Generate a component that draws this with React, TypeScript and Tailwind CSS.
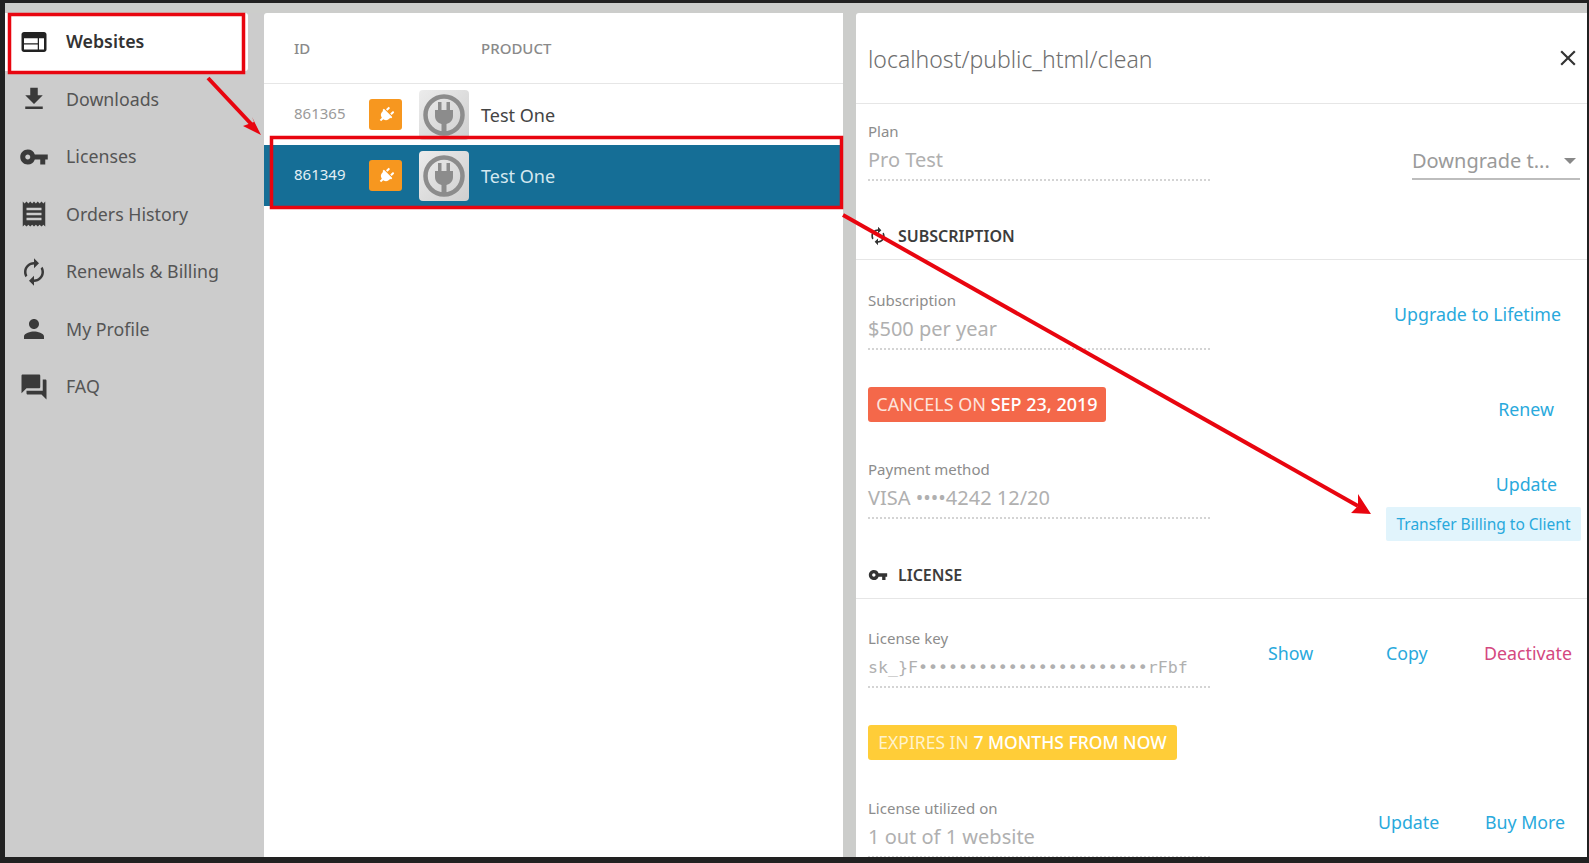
import type { ReactNode } from "react";
import { FaPlug } from "react-icons/fa";
import {
  MdAutorenew,
  MdClose,
  MdFileDownload,
  MdForum,
  MdPerson,
  MdReceipt,
  MdVpnKey,
  MdWeb,
} from "react-icons/md";

const navItems = [
  { label: "Websites", icon: MdWeb, active: true },
  { label: "Downloads", icon: MdFileDownload },
  { label: "Licenses", icon: MdVpnKey },
  { label: "Orders History", icon: MdReceipt },
  { label: "Renewals & Billing", icon: MdAutorenew },
  { label: "My Profile", icon: MdPerson },
  { label: "FAQ", icon: MdForum },
];

const link = "text-[17.800px] text-[#29a9dc]";

function PlugThumb() {
  return (
    <div className="h-[50px] w-[50px] shrink-0 rounded-[4px] bg-gradient-to-br from-[#ececec] to-[#cfcfcf]">
      <svg viewBox="0 0 50 50" className="h-full w-full">
        <circle cx="25" cy="25" r="18.500" fill="none" stroke="#8c8c8c" strokeWidth="4.500" />
        <path
          d="M19 12h3.500v8h5v-8H31v8h3v6c0 4.500-3 7-6.500 8v10h-5V34c-3.500-1-6.500-3.500-6.500-8v-6h3z"
          fill="#8c8c8c"
        />
      </svg>
    </div>
  );
}

function ProductRow({ id, selected }: { id: string; selected?: boolean }) {
  return (
    <div className={`flex h-[61px] items-center pl-[30px] ${selected ? "bg-[#156e96]" : ""}`}>
      <span className={`-mt-[2px] w-[75px] text-[15px] ${selected ? "text-[#e3f0f5]" : "text-[#9a9a9a]"}`}>{id}</span>
      <span className="flex h-[31px] w-[33px] items-center justify-center rounded-[3px] bg-[#f7971f] text-white">
        <FaPlug className="h-[16px] w-[16px] rotate-45" />
      </span>
      <span className="ml-[17px]">
        <PlugThumb />
      </span>
      <span className={`mt-[1px] ml-[12px] text-[18px] ${selected ? "text-[#d4e8f0]" : "text-[#444]"}`}>Test One</span>
    </div>
  );
}

function Field({ label, value, mono }: { label: string; value: string; mono?: boolean }) {
  return (
    <div className="w-[342px] shrink-0 border-b-2 border-dotted border-[#d4d4d4] pb-[5px]">
      <div className="h-[25px] text-[15px] leading-[24px] text-[#8c8c8c]">{label}</div>
      <div
        className={
          mono
            ? "h-[30px] font-['DejaVu_Sans_Mono',monospace] text-[16.600px] leading-[33px] text-[#b0b0b0]"
            : "h-[30px] text-[20px] leading-[32px] text-[#b0b0b0]"
        }
      >
        {value}
      </div>
    </div>
  );
}

function SectionTitle({ icon, children }: { icon: ReactNode; children: ReactNode }) {
  return (
    <div className="flex h-[42px] items-center gap-[10px] border-b border-[#e6e6e6] pb-[5px] pl-[12px] text-[16px] font-semibold text-[#3c3c3c]">
      <span className="flex w-[20px] justify-center text-[#333]">{icon}</span>
      {children}
    </div>
  );
}

export default function App() {
  return (
    <div className="relative flex h-[863px] w-[1589px] flex-col overflow-hidden bg-[#212121] pt-[3px] pr-[2px] pb-[6px] pl-[5px] font-['Noto_Sans',sans-serif]">
      <div className="flex min-h-0 flex-1 bg-[#cccdcb] pt-[10px]">
        <nav className="w-[259px] shrink-0 bg-[#cccccc]">
          {navItems.map((item) => {
            const Icon = item.icon;
            return (
              <div
                key={item.label}
                className={`flex h-[57.500px] w-[243px] items-center gap-[17px] pl-[14px] text-[17.800px] ${
                  item.active ? "rounded-r-[3px] bg-white font-semibold text-[#333]" : "text-[#555]"
                }`}
              >
                <Icon className={`h-[30px] w-[30px] shrink-0 ${item.active ? "text-[#222]" : "text-[#3a3a3a]"}`} />
                <span>{item.label}</span>
              </div>
            );
          })}
        </nav>

        <section className="w-[579px] shrink-0 rounded-tl-[3px] bg-white">
          <div className="flex h-[71px] items-center border-b border-[#e6e6e6] pl-[30px] text-[15px] font-medium text-[#8a8a8a]">
            <span className="w-[187px]">ID</span>
            <span>PRODUCT</span>
          </div>
          <ProductRow id="861365" />
          <ProductRow id="861349" selected />
        </section>

        <section className="ml-[13px] min-w-0 flex-1 overflow-hidden rounded-tl-[3px] bg-white">
          <div className="flex h-[91px] items-center justify-between border-b border-[#e6e6e6] pr-[6px] pl-[12px]">
            <span className="mt-[2px] text-[23px] font-light text-[#6e6e6e]">localhost/public_html/clean</span>
            <MdClose className="h-[26px] w-[26px] text-[#333]" />
          </div>

          <div className="flex items-start justify-between pt-[15px] pr-[7px] pl-[12px]">
            <Field label="Plan" value="Pro Test" />
            <div className="mt-[27px] flex h-[34px] w-[168px] items-center justify-between border-b-2 border-[#bdbdbd] pr-[4px] pb-[2px] text-[20px] text-[#9a9a9a]">
              <span>Downgrade t...</span>
              <span className="h-0 w-0 border-x-[6px] border-t-[6px] border-x-transparent border-t-[#888]" />
            </div>
          </div>

          <div className="pt-[37px]">
            <SectionTitle icon={<MdAutorenew className="h-[20px] w-[20px]" />}>SUBSCRIPTION</SectionTitle>
          </div>

          <div className="flex items-start justify-between pt-[28px] pr-[26px] pl-[12px]">
            <Field label="Subscription" value="$500 per year" />
            <span className={`${link} mt-[13px]`}>Upgrade to Lifetime</span>
          </div>

          <div className="flex items-start justify-between pt-[37px] pr-[33px] pl-[12px]">
            <div className="flex h-[35px] w-[238px] items-center justify-center rounded-[3px] bg-[#f4684a] text-[18px] text-[#fde3dc]">
              CANCELS ON&nbsp;<b className="font-medium text-white">SEP 23, 2019</b>
            </div>
            <span className={`${link} mt-[9px]`}>Renew</span>
          </div>

          <div className="flex h-[96px] items-start justify-between pt-[34px] pr-[6px] pl-[12px]">
            <Field label="Payment method" value="VISA ••••4242 12/20" />
            <div className="mt-[14px] flex flex-col items-end">
              <span className={`${link} pr-[24px]`}>Update</span>
              <span className="mt-[10px] flex h-[34px] w-[195px] items-center justify-center rounded-[2px] bg-[#e1f4fc] pt-[1px] text-[15.500px] text-[#29a9dc]">
                Transfer Billing to Client
              </span>
            </div>
          </div>

          <div className="pt-[38px]">
            <SectionTitle icon={<MdVpnKey className="h-[20px] w-[20px]" />}>LICENSE</SectionTitle>
          </div>

          <div className="flex items-start pt-[27px] pl-[12px]">
            <Field mono label="License key" value="sk_}F•••••••••••••••••••••••rFbf" />
            <div className="mt-[14px] ml-[58px] flex text-[17.800px]">
              <span className="w-[118px] text-[#29a9dc]">Show</span>
              <span className="w-[98px] text-[#29a9dc]">Copy</span>
              <span className="text-[#d4487f]">Deactivate</span>
            </div>
          </div>

          <div className="pt-[37px] pl-[12px]">
            <div className="flex h-[35px] w-[309px] items-center justify-center rounded-[3px] bg-[#ffcd38] text-[17.500px] text-[#fff3cc]">
              EXPIRES IN&nbsp;<b className="font-medium text-white">7 MONTHS FROM NOW</b>
            </div>
          </div>

          <div className="flex items-start pt-[36px] pl-[12px]">
            <Field label="License utilized on" value="1 out of 1 website" />
            <div className="mt-[13px] ml-[168px] flex text-[17.800px] text-[#29a9dc]">
              <span className="w-[107px]">Update</span>
              <span>Buy More</span>
            </div>
          </div>
        </section>
      </div>

      {/* annotations drawn on top of the screenshot */}
      <svg className="pointer-events-none absolute inset-0" width="1589" height="863" fill="none">
        <rect x="9.500" y="14.500" width="234" height="58" stroke="#e8050f" strokeWidth="3.500" />
        <rect x="271.500" y="137.500" width="570" height="70" stroke="#e8050f" strokeWidth="3.500" />
        <path d="M208 78 L254 127" stroke="#e8050f" strokeWidth="4" />
        <path d="M261 135 L243 126 L254 122 L252 117 Z" fill="#e8050f" />
        <path d="M843 215 L1358 506" stroke="#e8050f" strokeWidth="4" />
        <path d="M1371 514 L1351 513 L1358 506 L1358 494 Z" fill="#e8050f" />
      </svg>
    </div>
  );
}
